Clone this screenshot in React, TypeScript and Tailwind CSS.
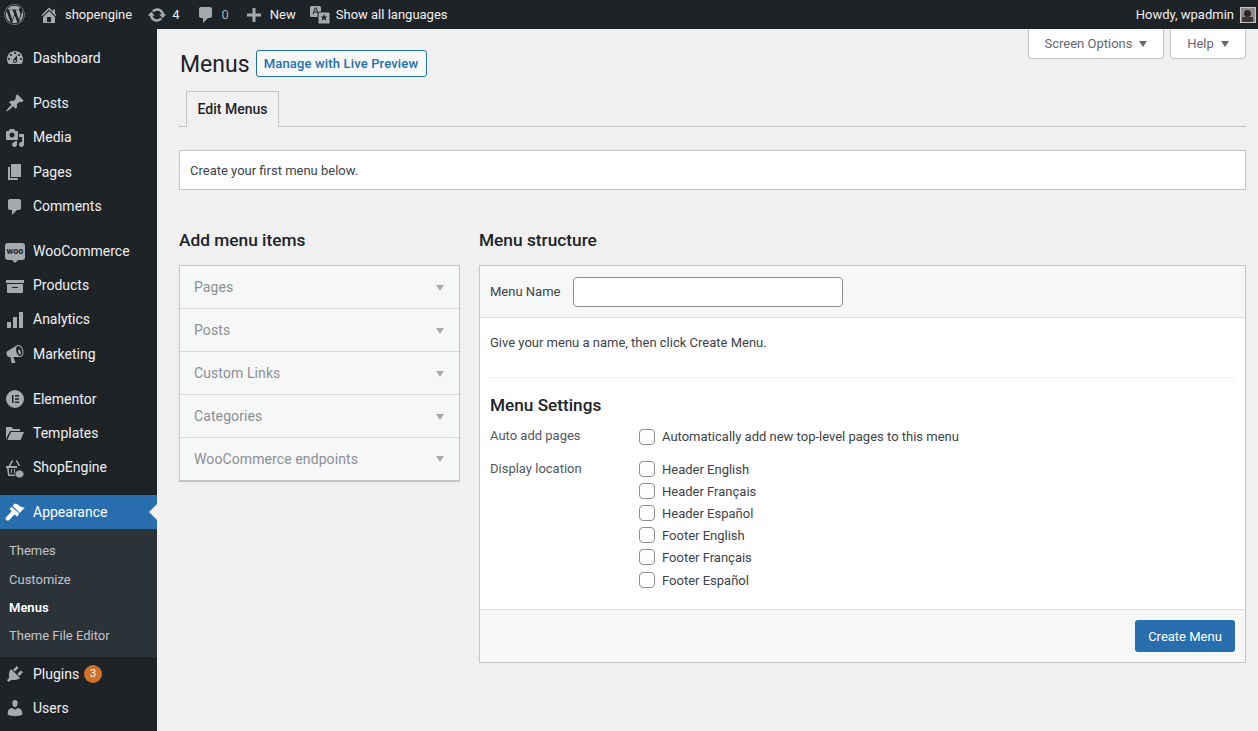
import type { ReactNode } from "react";
import { FaWordpress } from "react-icons/fa";

const paths = {
  dashboard:
    "M3.76 16h12.48c1.1-1.37 1.76-3.11 1.76-5 0-4.42-3.58-8-8-8s-8 3.58-8 8c0 1.89.66 3.63 1.76 5zM10 4c.55 0 1 .45 1 1s-.45 1-1 1-1-.45-1-1 .45-1 1-1zM6 6c.55 0 1 .45 1 1s-.45 1-1 1-1-.45-1-1 .45-1 1-1zm8 0c.55 0 1 .45 1 1s-.45 1-1 1-1-.45-1-1 .45-1 1-1zm-5.37 5.55L12 7v6c0 1.1-.9 2-2 2s-2-.9-2-2c0-.57.24-1.08.63-1.45zM4 10c.55 0 1 .45 1 1s-.45 1-1 1-1-.45-1-1 .45-1 1-1zm12 0c.55 0 1 .45 1 1s-.45 1-1 1-1-.45-1-1 .45-1 1-1zm-5 3c0-.55-.45-1-1-1s-1 .45-1 1 .45 1 1 1 1-.45 1-1z",
  pin: "M10.44 3.02l1.82-1.82 6.36 6.35-1.83 1.82c-1.05-.68-2.48-.57-3.41.36l-.75.75c-.92.93-1.04 2.35-.35 3.41l-1.83 1.82-2.41-2.41-2.8 2.79c-.42.42-3.38 2.71-3.8 2.29s1.86-3.39 2.28-3.81l2.79-2.79L4.1 9.36l1.83-1.82c1.05.69 2.48.57 3.4-.36l.75-.75c.93-.92 1.05-2.35.36-3.41z",
  media:
    "M13 11V4c0-.55-.45-1-1-1h-1.67L9 1H5L3.67 3H2c-.55 0-1 .45-1 1v7c0 .55.45 1 1 1h10c.55 0 1-.45 1-1zM7 4.5c1.38 0 2.5 1.12 2.5 2.5S8.38 9.5 7 9.5 4.5 8.38 4.5 7 5.62 4.5 7 4.5zM14 6h5v10.5c0 1.38-1.12 2.5-2.5 2.5S14 17.88 14 16.5s1.12-2.5 2.5-2.5c.17 0 .34.02.5.05V9h-3V6zm-4 8.05V13h2v3.5c0 1.38-1.12 2.5-2.5 2.5S7 17.88 7 16.5 8.12 14 9.5 14c.17 0 .34.02.5.05z",
  pages: "M6 15V2h10v13H6zm-1 1h8v2H3V5h2v11z",
  comment: "M5 2h9c1.1 0 2 .9 2 2v7c0 1.1-.9 2-2 2h-2l-5 5v-5H5c-1.1 0-2-.9-2-2V4c0-1.1.9-2 2-2z",
  archive: "M19 4v3H1V4h18zM2 8h16v8c0 .55-.45 1-1 1H3c-.55 0-1-.45-1-1V8zm5 3v1h6v-1H7z",
  chart: "M18 18V2h-4v16h4zm-6 0V7H8v11h4zm-6 0v-6H2v6h4z",
  megaphone:
    "M18.15 5.94c.46 1.62.38 3.22-.02 4.48-.42 1.28-1.26 2.18-2.3 2.48-.16.06-.26.06-.4.06-.06.02-.12.02-.18.02-.06.02-.14.02-.22.02H8.2l2.22 5.5c.02.14-.06.26-.14.34-.08.1-.24.16-.34.16H6.95c-.1 0-.26-.06-.34-.16-.08-.08-.16-.2-.14-.34l-1-5.5H4.25l-.02-.02c-.5.06-1.08-.18-1.54-.62s-.88-1.08-1.06-1.88c-.24-.8-.2-1.56-.02-2.2.18-.62.58-1.08 1.06-1.3l.02-.02 9-5.4c.1-.06.18-.1.24-.16.06-.04.14-.08.24-.12.16-.08.28-.12.5-.18 1.04-.3 2.24.1 3.22.98s1.84 2.24 2.26 3.86zm-2.58 5.98h-.02c.4-.1.74-.34 1.04-.7.58-.7.86-1.76.86-3.04 0-.64-.1-1.3-.26-1.98-.34-1.36-1.02-2.5-1.78-3.24s-1.68-1.1-2.46-.88c-.82.22-1.4.96-1.7 2-.32 1.04-.28 2.36.06 3.72.38 1.36 1 2.5 1.8 3.24.78.74 1.62 1.1 2.46.88zm-.38-1.48h.02c.36-.1.6-.48.66-.98.06-.48 0-1.14-.2-1.82-.18-.68-.48-1.28-.82-1.68-.36-.4-.74-.56-1.08-.46-.36.1-.6.48-.66.98-.06.48 0 1.14.2 1.82.18.68.48 1.28.82 1.68.36.4.74.56 1.08.46z",
  elementor:
    "M10 1a9 9 0 1 0 0 18 9 9 0 0 0 0-18zM7 6h1.5v8H7V6zm3 0h4v1.5h-4V6zm0 3.2h4v1.5h-4V9.2zm0 3.3h4V14h-4v-1.5z",
  folder: "M1 16V4h5.5l1.5 2h7v2H5L1 16zm1.4 1L6 9h13l-3.5 8H2.4z",
  basket:
    "M7 2L3.5 8H1v2h1l1 7.5c0 .3.3.5.6.5H10v-1.5H4.5L3.7 10H12V8H5.3l2.9-5.2L7 2zm5 0l-1.2.7L13.5 8H15.2L12 2zM6 11h1v4H6v-4zm3 0h1v4H9v-4zm6.5 1l.6 1.2 1.3-.2.2 1.3 1.2.6-.6 1.1.6 1.1-1.2.6-.2 1.3-1.3-.2-.6 1.2-1-.8-1 .8-.6-1.2-1.3.2-.2-1.3-1.2-.6.6-1.1-.6-1.1 1.2-.6.2-1.3 1.3.2.6-1.2 1 .8 1-.8z",
  brush:
    "M19.8 5.4c-1.6.4-3-.2-4.2-.9-1.4-.8-1.7-1.3-2.9-2.1-1.2-.8-3-.9-3.5-.3L7.6 3.7l7.2 7.2 5-5.5zM6.9 4.4L5.1 6.2c-.4.4-.4 1 0 1.4l1 1c.4.4.4 1 0 1.4L1.2 14.9c-.9.9-.9 2.2 0 3 .8.9 2.1.9 3 0L9 13c.4-.4 1-.4 1.4 0l1 1.1c.4.4 1 .4 1.4 0l1.3-2.5-7.7-7.2z",
  plugin:
    "M13.11 4.36L9.87 7.6 8 5.73l3.24-3.24c.35-.34 1.05-.2 1.56.32.52.51.66 1.21.31 1.55zm-8 1.77l.91-1.12 9.01 9.01-1.19.84c-.71.71-2.63 1.16-3.82 1.16H6.14L4.9 17.26c-.59.59-1.54.59-2.12 0-.59-.58-.59-1.53 0-2.12l1.24-1.24v-3.88c0-1.13.4-3.19 1.09-3.89zm7.26 3.97l3.24-3.24c.34-.35 1.04-.21 1.55.31.52.51.66 1.21.31 1.55l-3.24 3.25z",
  users:
    "M10 9.25c-2.27 0-2.73-3.44-2.73-3.44C7 4.02 7.82 2 9.97 2c2.16 0 2.98 2.02 2.71 3.81 0 0-.41 3.44-2.68 3.44zm0 2.57L12.72 10c2.39 0 4.52 2.33 4.52 4.53v2.49s-3.65 1.13-7.24 1.13c-3.65 0-7.24-1.13-7.24-1.13v-2.49c0-2.25 1.94-4.48 4.47-4.48z",
  home: "M16 8.5l1.53 1.53-1.06 1.06L10 4.62l-6.47 6.47-1.06-1.06L10 2.5l4 4v-2h2v4zm-6-2.46l6 5.99V18H4v-5.97zM12 17v-5H8v5h4z",
  updates:
    "M10.2 3.28c3.53 0 6.43 2.61 6.92 6h2.08l-3.5 4-3.5-4h2.32c-.45-1.97-2.21-3.45-4.32-3.45-1.45 0-2.73.71-3.54 1.78L4.95 5.66C6.23 4.2 8.11 3.28 10.2 3.28zm-.4 13.44c-3.52 0-6.43-2.61-6.92-6H.8l3.5-4c1.17 1.33 2.33 2.67 3.5 4H5.48c.45 1.97 2.21 3.45 4.32 3.45 1.45 0 2.73-.71 3.54-1.78l1.71 1.95c-1.28 1.46-3.15 2.38-5.25 2.38z",
  plus: "M17 8.5v3h-5.5V17h-3v-5.5H3v-3h5.5V3h3v5.5H17z",
};

const Dash = ({ d, className = "w-5 h-5" }: { d: string; className?: string }) => (
  <svg viewBox="0 0 20 20" fill="currentColor" fillRule="evenodd" className={`${className} shrink-0`}>
    <path d={d} />
  </svg>
);

const Translate = () => (
  <svg viewBox="0 0 20 20" className="w-5 h-5 shrink-0">
    <rect x="0" y="1" width="11" height="11" rx="1.5" fill="#a7aaad" />
    <rect x="8" y="7" width="12" height="12" rx="1.5" fill="#a7aaad" stroke="#1d2327" strokeWidth="1" />
    <path d="M3 9l2.2-6h1l2 6M4 7h3" fill="none" stroke="#1d2327" strokeWidth="1" />
    <path d="M14 9l1 2.5h2.5l-2 1.6.8 2.6-2.3-1.5-2.3 1.5.8-2.6-2-1.6H13z" fill="#1d2327" />
  </svg>
);

const Caret = ({ className }: { className: string }) => (
  <svg viewBox="0 0 8 6" fill="currentColor" className={`w-2 h-1.5 shrink-0 ${className}`}>
    <polygon points="0,0 8,0 4,6" />
  </svg>
);

const Row = ({ icon, label, active, children }: { icon: ReactNode; label: string; active?: boolean; children?: ReactNode }) => (
  <div className={`relative flex items-center pl-[5px] ${active ? "h-[34px] bg-[#286eae] text-white" : "h-[34.4px] text-[#f0f0f1]"}`}>
    <span className={`w-[28px] flex justify-start ${active ? "text-white" : "text-[#a7aaad]"}`}>{icon}</span>
    <span className={active ? "pt-px" : ""}>{label}</span>
    {children}
    {active && (
      <span className="absolute right-0 top-1/2 -mt-2 border-y-8 border-r-8 border-y-transparent border-r-[#f0f0f1]" />
    )}
  </div>
);

const Sidebar = () => (
  <aside className="w-[157px] shrink-0 bg-[#1d2327] pt-3 text-[14px]">
    <Row icon={<Dash d={paths.dashboard} />} label="Dashboard" />
    <div className="h-[10.8px]" />
    <Row icon={<Dash d={paths.pin} />} label="Posts" />
    <Row icon={<Dash d={paths.media} />} label="Media" />
    <Row icon={<Dash d={paths.pages} />} label="Pages" />
    <Row icon={<Dash d={paths.comment} />} label="Comments" />
    <div className="h-[10.2px]" />
    <Row
      icon={
        <span className="relative flex items-center justify-center w-5 h-[17px] rounded-[3px] bg-[#a7aaad] text-[#1d2327] text-[9px] font-bold leading-none">
          woo
          <span className="absolute left-[7px] -bottom-[3px] border-x-[3px] border-t-[3px] border-x-transparent border-t-[#a7aaad]" />
        </span>
      }
      label="WooCommerce"
    />
    <Row icon={<Dash d={paths.archive} />} label="Products" />
    <Row icon={<Dash d={paths.chart} />} label="Analytics" />
    <Row icon={<Dash d={paths.megaphone} />} label="Marketing" />
    <div className="h-[10.4px]" />
    <Row icon={<Dash d={paths.elementor} />} label="Elementor" />
    <Row icon={<Dash d={paths.folder} />} label="Templates" />
    <Row icon={<Dash d={paths.basket} />} label="ShopEngine" />
    <div className="h-[9.8px]" />
    <Row icon={<Dash d={paths.brush} />} label="Appearance" active />
    <div className="bg-[#2c3338] h-[128px] pt-[7.4px] pl-[9px] text-[13px] text-[#c3c4c7]">
      <div className="h-[28.4px] flex items-center">Themes</div>
      <div className="h-[28.8px] pt-px flex items-center">Customize</div>
      <div className="h-[28px] flex items-center font-semibold text-white">Menus</div>
      <div className="h-[28px] flex items-center">Theme File Editor</div>
    </div>
    <Row icon={<Dash d={paths.plugin} />} label="Plugins">
      <span className="ml-[5px] w-[18px] h-[18px] rounded-full bg-[#d0722c] flex items-center justify-center text-[11px] text-white">3</span>
    </Row>
    <Row icon={<Dash d={paths.users} />} label="Users" />
  </aside>
);

const TopBar = () => (
  <header className="h-[29px] shrink-0 bg-[#1d2327] flex items-center text-[13px] text-[#f0f0f1]">
    <span className="w-[34px] pl-[4px] flex justify-start text-[#a7aaad]">
      <FaWordpress className="w-[21px] h-[21px]" />
    </span>
    <span className="flex items-center gap-[6px] ml-[5px] text-[#a7aaad]">
      <Dash d={paths.home} />
      <span className="text-[#f0f0f1]">shopengine</span>
    </span>
    <span className="flex items-center gap-[5px] ml-[15px] text-[#a7aaad]">
      <Dash d={paths.updates} />
      <span className="text-[#f0f0f1]">4</span>
    </span>
    <span className="flex items-center gap-[6px] ml-[16px] text-[#a7aaad]">
      <Dash d={paths.comment} />
      <span>0</span>
    </span>
    <span className="flex items-center gap-[6px] ml-[15px] text-[#a7aaad]">
      <Dash d={paths.plus} />
      <span className="text-[#f0f0f1]">New</span>
    </span>
    <span className="flex items-center gap-[6px] ml-[14px]">
      <Translate />
      <span>Show all languages</span>
    </span>
    <span className="ml-auto mr-[2px] flex items-center gap-[6px]">
      Howdy, wpadmin
      <span className="relative w-4 h-4 overflow-hidden bg-[#8d8a88] border border-[#c3c4c7]">
        <span className="absolute left-[3px] top-[2px] w-[7px] h-[7px] rounded-full bg-[#2b2628]" />
        <span className="absolute left-[1px] top-[9px] w-[11px] h-[6px] bg-[#3a3335]" />
      </span>
    </span>
  </header>
);

const MetaTab = ({ label, className }: { label: string; className: string }) => (
  <div className={`h-[30px] flex items-center justify-center gap-[7px] bg-white border border-t-0 border-[#c3c4c7] rounded-b-[4px] text-[#646970] ${className}`}>
    {label}
    <Caret className="text-[#646970]" />
  </div>
);

const accordion = ["Pages", "Posts", "Custom Links", "Categories", "WooCommerce endpoints"];

const AddItems = () => (
  <section className="w-[281px] shrink-0">
    <h2 className="text-[17.3px] leading-[22px] font-medium text-[#1d2327] mb-[14px]">Add menu items</h2>
    <div className="border border-[#c3c4c7] border-b-2 bg-[#f6f7f7]">
      {accordion.map((item, i) => (
        <div
          key={item}
          className={`flex items-center justify-between pl-[14px] pr-[15px] text-[14px] tracking-[0.1px] text-[#8c8f94] ${i < 4 ? "h-[43px] pt-px border-b border-[#dcdcde]" : "h-[42px]"}`}
        >
          {item}
          <Caret className="text-[#a7aaad]" />
        </div>
      ))}
    </div>
  </section>
);

const Check = ({ label, className = "" }: { label: string; className?: string }) => (
  <label className={`flex items-center gap-[7px] h-[22px] ${className}`}>
    <span className="w-4 h-4 rounded-[4px] border border-[#8c8f94] bg-white shrink-0" />
    <span>{label}</span>
  </label>
);

const locations = ["Header English", "Header Français", "Header Español", "Footer English", "Footer Français", "Footer Español"];

const Structure = () => (
  <section className="flex-1 min-w-0">
    <h2 className="text-[17.3px] leading-[22px] font-medium text-[#1d2327] mb-[14px]">Menu structure</h2>
    <div className="border border-[#c3c4c7] bg-white">
      <div className="h-[52px] flex items-center gap-[13px] px-[10px] bg-[#f6f7f7] border-b border-[#dcdcde]">
        <span className="pt-px">Menu Name</span>
        <input className="w-[270px] h-[30px] rounded-[4px] border border-[#8c8f94] bg-white" aria-label="Menu Name" />
      </div>
      <div className="px-[10px]">
        <p className="pt-[16px] pb-[25px] leading-[18px] border-b border-[#f0f0f1]">Give your menu a name, then click Create Menu.</p>
        <h3 className="mt-[16px] text-[17.2px] leading-[22px] font-medium text-[#1d2327]">Menu Settings</h3>
        <div className="mt-[10px] flex items-center h-[22px]">
          <span className="w-[149px] -mt-[3px] text-[#50575e]">Auto add pages</span>
          <Check label="Automatically add new top-level pages to this menu" />
        </div>
        <div className="mt-[10px] flex items-start">
          <span className="w-[149px] pt-[2px] leading-[18px] text-[#50575e]">Display location</span>
          <div>
            {locations.map((loc, i) => (
              <Check key={loc} label={loc} className={`${i === 5 ? "mt-px" : ""} [&>span:last-child]:pt-px`} />
            ))}
          </div>
        </div>
      </div>
      <div className="mt-[18px] h-[53px] flex items-center justify-end pr-[10px] bg-[#f6f7f7] border-t border-[#dcdcde]">
        <button className="w-[100px] h-[32px] pt-px rounded-[3px] bg-[#286eae] text-white">Create Menu</button>
      </div>
    </div>
  </section>
);

export default function App() {
  return (
    <div className="h-[731px] overflow-hidden flex flex-col bg-[#f0f0f1] text-[13px] text-[#3c434a] font-['Roboto',sans-serif]">
      <TopBar />
      <div className="flex flex-1 min-h-0">
        <Sidebar />
        <main className="flex-1 min-w-0 pl-[22px] pr-3">
          <div className="flex items-start justify-between h-[62px]">
            <div className="flex items-center pt-[21px] gap-[6px]">
              <h1 className="text-[23px] leading-[29px] pl-px text-[#1d2327]">Menus</h1>
              <span className="w-[171px] h-[27px] -mt-[2px] flex items-center justify-center rounded-[3px] border border-[#2271b1] bg-[#f6f7f7] font-medium tracking-[0.15px] text-[#2271b1]">
                Manage with Live Preview
              </span>
            </div>
            <div className="flex gap-[6px]">
              <MetaTab label="Screen Options" className="w-[136px]" />
              <MetaTab label="Help" className="w-[76px]" />
            </div>
          </div>
          <div className="h-[36px] border-b border-[#c3c4c7] pl-[7px]">
            <div className="w-[93px] h-[36px] flex items-center justify-center border border-b-0 border-[#c3c4c7] bg-[#f0f0f1] text-[14px] font-medium text-[#1d2327]">
              Edit Menus
            </div>
          </div>
          <div className="mt-[23px] h-[40px] flex items-center px-[10px] pt-px bg-white border border-[#c3c4c7]">Create your first menu below.</div>
          <div className="mt-[39px] flex gap-[19px]">
            <AddItems />
            <Structure />
          </div>
        </main>
      </div>
    </div>
  );
}
